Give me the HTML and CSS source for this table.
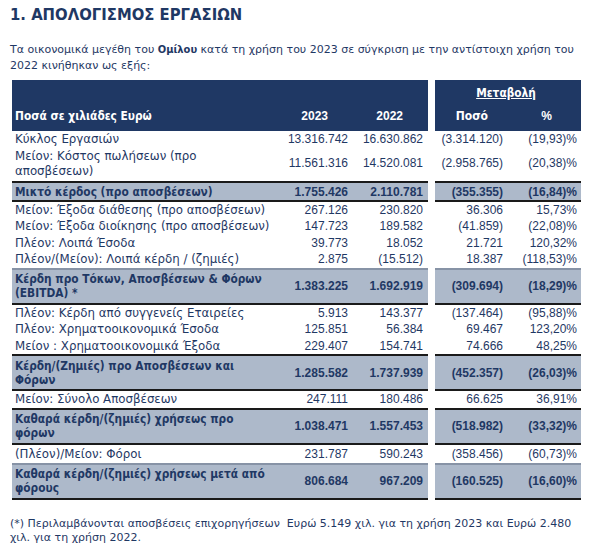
FILE: index.html
```html
<!DOCTYPE html>
<html lang="el">
<head>
<meta charset="utf-8">
<link rel="stylesheet" href="styles.css">
</head>
<body>
<h1 class="title">1. ΑΠΟΛΟΓΙΣΜΟΣ ΕΡΓΑΣΙΩΝ</h1>
<p class="intro">Τα οικονομικά μεγέθη του <b>Ομίλου</b> κατά τη χρήση του 2023 σε σύγκριση με την αντίστοιχη χρήση του<br>2022 κινήθηκαν ως εξής:</p>

<div class="table">
  <div class="row head">
    <div class="l">
      <div class="lab">Ποσά σε χιλιάδες Ευρώ</div>
      <div class="num h23">2023</div>
      <div class="num h22">2022</div>
    </div>
    <div class="r">
      <div class="chg">Μεταβολή</div>
      <div class="num hpos">Ποσό</div>
      <div class="num hpct">%</div>
    </div>
  </div>

  <div class="row">
    <div class="l"><div class="lab">Κύκλος Εργασιών</div><div class="num">13.316.742</div><div class="num">16.630.862</div></div>
    <div class="r"><div class="num">(3.314.120)</div><div class="num">(19,93)%</div></div>
  </div>
  <div class="row two">
    <div class="l"><div class="lab">Μείον: Κόστος πωλήσεων (προ<br>αποσβέσεων)</div><div class="num">11.561.316</div><div class="num">14.520.081</div></div>
    <div class="r"><div class="num">(2.958.765)</div><div class="num">(20,38)%</div></div>
  </div>
  <div class="row sum sum-first">
    <div class="l"><div class="lab">Μικτό κέρδος (προ αποσβέσεων)</div><div class="num">1.755.426</div><div class="num">2.110.781</div></div>
    <div class="r"><div class="num">(355.355)</div><div class="num">(16,84)%</div></div>
  </div>
  <div class="row">
    <div class="l"><div class="lab">Μείον: Έξοδα διάθεσης (προ αποσβέσεων)</div><div class="num">267.126</div><div class="num">230.820</div></div>
    <div class="r"><div class="num">36.306</div><div class="num">15,73%</div></div>
  </div>
  <div class="row">
    <div class="l"><div class="lab">Μείον: Έξοδα διοίκησης (προ αποσβέσεων)</div><div class="num">147.723</div><div class="num">189.582</div></div>
    <div class="r"><div class="num">(41.859)</div><div class="num">(22,08)%</div></div>
  </div>
  <div class="row">
    <div class="l"><div class="lab">Πλέον: Λοιπά Έσοδα</div><div class="num">39.773</div><div class="num">18.052</div></div>
    <div class="r"><div class="num">21.721</div><div class="num">120,32%</div></div>
  </div>
  <div class="row">
    <div class="l"><div class="lab">Πλέον/(Μείον): Λοιπά κέρδη / (ζημιές)</div><div class="num">2.875</div><div class="num">(15.512)</div></div>
    <div class="r"><div class="num">18.387</div><div class="num">(118,53)%</div></div>
  </div>
  <div class="row sum sum-thin">
    <div class="l"><div class="lab">Κέρδη προ Τόκων, Αποσβέσεων &amp; Φόρων<br>(EBITDA) *</div><div class="num">1.383.225</div><div class="num">1.692.919</div></div>
    <div class="r"><div class="num">(309.694)</div><div class="num">(18,29)%</div></div>
  </div>
  <div class="row">
    <div class="l"><div class="lab">Πλέον: Κέρδη από συγγενείς Εταιρείες</div><div class="num">5.913</div><div class="num">143.377</div></div>
    <div class="r"><div class="num">(137.464)</div><div class="num">(95,88)%</div></div>
  </div>
  <div class="row">
    <div class="l"><div class="lab">Πλέον: Χρηματοοικονομικά Έσοδα</div><div class="num">125.851</div><div class="num">56.384</div></div>
    <div class="r"><div class="num">69.467</div><div class="num">123,20%</div></div>
  </div>
  <div class="row">
    <div class="l"><div class="lab">Μείον : Χρηματοοικονομικά Έξοδα</div><div class="num">229.407</div><div class="num">154.741</div></div>
    <div class="r"><div class="num">74.666</div><div class="num">48,25%</div></div>
  </div>
  <div class="row sum">
    <div class="l"><div class="lab">Κέρδη/(Ζημιές) προ Αποσβέσεων και<br>Φόρων</div><div class="num">1.285.582</div><div class="num">1.737.939</div></div>
    <div class="r"><div class="num">(452.357)</div><div class="num">(26,03)%</div></div>
  </div>
  <div class="row">
    <div class="l"><div class="lab">Μείον: Σύνολο Αποσβέσεων</div><div class="num">247.111</div><div class="num">180.486</div></div>
    <div class="r"><div class="num">66.625</div><div class="num">36,91%</div></div>
  </div>
  <div class="row sum">
    <div class="l"><div class="lab">Καθαρά κέρδη/(ζημιές) χρήσεως προ<br>φόρων</div><div class="num">1.038.471</div><div class="num">1.557.453</div></div>
    <div class="r"><div class="num">(518.982)</div><div class="num">(33,32)%</div></div>
  </div>
  <div class="row tall">
    <div class="l"><div class="lab">(Πλέον)/Μείον: Φόροι</div><div class="num">231.787</div><div class="num">590.243</div></div>
    <div class="r"><div class="num">(358.456)</div><div class="num">(60,73)%</div></div>
  </div>
  <div class="row sum sum-thin">
    <div class="l"><div class="lab">Καθαρά κέρδη/(ζημιές) χρήσεως μετά από<br>φόρους</div><div class="num">806.684</div><div class="num">967.209</div></div>
    <div class="r"><div class="num">(160.525)</div><div class="num">(16,60)%</div></div>
  </div>
</div>

<p class="note">(*) Περιλαμβάνονται αποσβέσεις επιχορηγήσεων&nbsp; Ευρώ 5.149 χιλ. για τη χρήση 2023 και Ευρώ 2.480<br>χιλ. για τη χρήση 2022.</p>
</body>
</html>
```

FILE: styles.css
```css
* { box-sizing: border-box; }
html, body { margin: 0; padding: 0; background: #fff; }
body {
  font-family: "DejaVu Sans", sans-serif;
  color: #1f3864;
  font-size: 11.8px;
  padding: 0 10px;
}
b, .sum .lab, .head .lab, .head .chg {
  font-family: "DejaVu Sans Condensed", "DejaVu Sans", sans-serif;
  font-weight: bold;
}
.title {
  margin: 0;
  padding-top: 5px;
  font-family: "DejaVu Sans Condensed", "DejaVu Sans", sans-serif;
  font-size: 16.5px;
  font-weight: bold;
  line-height: 20px;
}
.intro {
  margin: 17px 0 0 0;
  font-size: 11px;
  line-height: 16px;
  white-space: nowrap;
}
.table {
  margin: 6px 0 0 2px;
  width: 569px;
}
.row {
  display: flex;
  gap: 7px;
}
.l {
  width: 416px;
  display: grid;
  grid-template-columns: 258px 78px 75px;
  padding-right: 5px;
  align-items: center;
}
.r {
  width: 146px;
  display: grid;
  grid-template-columns: 68px 74px;
  padding-right: 4px;
  align-items: center;
}
.lab { padding-left: 3px; white-space: nowrap; }
.num {
  text-align: right;
  white-space: nowrap;
  font-family: "Liberation Sans", Arial, sans-serif;
  font-size: 12px;
}
.row > div {
  padding-top: 1px;
  padding-bottom: 1px;
  line-height: 14.5px;
}
.row.two > div { line-height: 15.5px; }
.row.tall > div { padding-top: 2px; padding-bottom: 1.5px; }

.head > div {
  background: #1f3864;
  color: #fff;
  font-weight: bold;
  height: 51px;
  align-items: end;
  padding-bottom: 8px;
}
.head .chg {
  grid-column: 1 / 3;
  text-align: center;
  text-decoration: underline;
  align-self: start;
  padding-top: 5px;
}
.head .r { align-content: space-between; }
.head .num { font-weight: bold; }
.h23 { padding-right: 20px; }
.h22 { padding-right: 20px; }
.hpos { padding-right: 15px; font-family: "DejaVu Sans Condensed", "DejaVu Sans", sans-serif; }
.hpct { padding-right: 25px; }

.row.sum > div {
  background: #adb9ca;
  font-weight: bold;
  border-top: 2px solid #1a1a1a;
  border-bottom: 2px solid #1a1a1a;
  padding-top: 2.5px;
  padding-bottom: 2px;
  line-height: 14.25px;
}
.row.sum-thin > div { border-top: 2px solid #8793a6; }
.row.sum-first > div { padding-top: 2px; padding-bottom: 1px; line-height: 14px; }

.note {
  margin: 17px 0 0 0;
  font-size: 11px;
  line-height: 14px;
  white-space: nowrap;
}
```
